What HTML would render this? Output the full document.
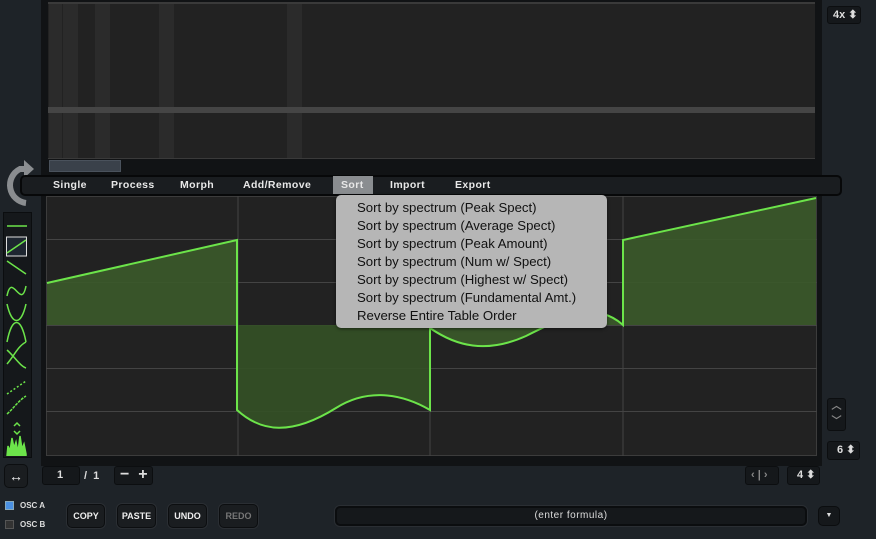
<!DOCTYPE html>
<html><head><meta charset="utf-8"><style>
*{margin:0;padding:0;box-sizing:border-box}
body{width:876px;height:539px;overflow:hidden;background:#1e2328;font-family:"Liberation Sans",sans-serif;position:relative}
.a{position:absolute}
.mb{font-weight:bold;font-size:10.5px;color:#e8e8e8;letter-spacing:.4px}
.btn{position:absolute;top:504px;height:24px;border:1px solid #0c0e10;border-radius:5px;background:#1a1d20;box-shadow:0 0 0 1px #2a2e33;color:#eee;font-weight:bold;font-size:9px;text-align:center;line-height:22px}
.box{position:absolute;background:#15181b;border:1px solid #0c0e10;border-radius:3px;color:#ddd;font-weight:bold;font-size:11px}
.mi{position:absolute;left:21px;font-size:13.2px;color:#111}
</style></head><body>
<div class="a" style="left:41px;top:0;width:781px;height:466px;background:#111315"></div>
<div class="a" style="left:48px;top:2px;width:767px;height:157px;background:#222;border-top:2px solid #3a3a3a;border-bottom:1px solid #3a3a3a"></div>
<div class="a" style="left:49px;top:4px;width:13px;height:154px;background:#2b2b2b"></div>
<div class="a" style="left:63px;top:4px;width:15px;height:154px;background:#2b2b2b"></div>
<div class="a" style="left:95px;top:4px;width:15px;height:154px;background:#2b2b2b"></div>
<div class="a" style="left:159px;top:4px;width:15px;height:154px;background:#2b2b2b"></div>
<div class="a" style="left:287px;top:4px;width:15px;height:154px;background:#2b2b2b"></div>
<div class="a" style="left:48px;top:107px;width:767px;height:6px;background:#454545"></div>
<div class="a" style="left:49px;top:160px;width:72px;height:12px;background:#3a414a;border:1px solid #4a525c"></div>
<svg class="a" style="left:2px;top:155px" width="34" height="52"><path d="M24 48 A18 18 0 0 1 18 14 L24 14" fill="none" stroke="#8a8d90" stroke-width="6"/><path d="M22 5 L32 14 L22 23Z" fill="#8a8d90"/></svg>
<div class="a" style="left:20px;top:175px;width:822px;height:21px;background:#1a1d20;border:2px solid #070809;border-radius:5px"></div>
<div class="a" style="left:333px;top:176px;width:40px;height:18px;background:#8a8d90"></div>
<div class="a mb" style="left:53px;top:179px">Single</div>
<div class="a mb" style="left:111px;top:179px">Process</div>
<div class="a mb" style="left:180px;top:179px">Morph</div>
<div class="a mb" style="left:243px;top:179px">Add/Remove</div>
<div class="a mb" style="left:341px;top:179px">Sort</div>
<div class="a mb" style="left:390px;top:179px">Import</div>
<div class="a mb" style="left:455px;top:179px">Export</div>
<svg class="a" style="left:46px;top:196px" width="771" height="260">
<rect x="0" y="0" width="771" height="260" fill="#222" stroke="#3c3c3c" stroke-width="2"/>
<g stroke="#444" stroke-width="1">
<line x1="192" y1="0" x2="192" y2="260"/><line x1="384" y1="0" x2="384" y2="260"/><line x1="577" y1="0" x2="577" y2="260"/>
<line x1="0" y1="43.5" x2="771" y2="43.5"/><line x1="0" y1="86.5" x2="771" y2="86.5"/><line x1="0" y1="129.5" x2="771" y2="129.5"/><line x1="0" y1="172.5" x2="771" y2="172.5"/><line x1="0" y1="215.5" x2="771" y2="215.5"/>
</g>
<path d="M1 87 L191 44 L191 129 L1 129 Z" fill="#3b5a2a" opacity=".9"/>
<path d="M191 129 L191 214 C215 236 245 240 290 212 C325 190 360 200 384 214 L384 129 Z" fill="#345126" opacity=".9"/>
<path d="M384 129 L384 132 C410 150 440 158 480 140 C520 120 550 105 577 129 Z" fill="#3b5a2a" opacity=".9"/>
<path d="M577 129 L577 44 L770 2 L770 129 Z" fill="#3b5a2a" opacity=".9"/>
<path d="M1 87 L191 44 L191 214 C215 236 245 240 290 212 C325 190 360 200 384 214 L384 132 C410 150 440 158 480 140 C520 120 550 105 577 129 L577 44 L770 2" fill="none" stroke="#6ce44a" stroke-width="2"/>
</svg>
<div class="a" style="left:336px;top:195px;width:271px;height:133px;background:#b6b6b6;border-radius:5px;box-shadow:0 1px 3px rgba(0,0,0,.5)">
<div class="mi" style="top:5px">Sort by spectrum (Peak Spect)</div>
<div class="mi" style="top:23px">Sort by spectrum (Average Spect)</div>
<div class="mi" style="top:41px">Sort by spectrum (Peak Amount)</div>
<div class="mi" style="top:59px">Sort by spectrum (Num w/ Spect)</div>
<div class="mi" style="top:77px">Sort by spectrum (Highest w/ Spect)</div>
<div class="mi" style="top:95px">Sort by spectrum (Fundamental Amt.)</div>
<div class="mi" style="top:113px">Reverse Entire Table Order</div>
</div>
<div class="a" style="left:3px;top:212px;width:29px;height:246px;background:#15181b;border:1px solid #0b0d0f"></div>
<svg class="a" style="left:6px;top:216px" width="22" height="240" fill="none" stroke="#6ce44a" stroke-width="1.5">
<line x1="1" y1="10" x2="21" y2="10"/>
<rect x="0.5" y="21" width="20" height="19" fill="#1e2630" stroke="#ddd" stroke-width="1"/>
<line x1="1" y1="37" x2="20" y2="24"/>
<line x1="1" y1="45" x2="20" y2="58"/>
<path d="M1 80 C6 55 15 95 20 70"/>
<path d="M1 88 C6 110 15 110 20 88"/>
<path d="M1 126 C6 100 15 100 20 126"/>
<path d="M1 148 C8 140 12 130 20 126"/>
<path d="M1 134 C8 140 14 150 20 152"/>
<path d="M1 178 L20 165" stroke-dasharray="2 2"/>
<path d="M1 198 C8 192 12 185 20 180" stroke-dasharray="3 1"/>
<path d="M8 210 l3 -3 l3 3 M8 215 l3 3 l3 -3"/>
<path d="M1 240 L2 230 L4 235 L6 222 L8 232 L10 226 L12 236 L14 220 L16 233 L18 228 L20 238 L20 240Z" fill="#6ce44a"/>
</svg>
<div class="a" style="left:4px;top:464px;width:24px;height:24px;border:1px solid #0c0e10;border-radius:5px;background:#1a1d20;color:#eee;font-size:14px;text-align:center;line-height:22px">↔</div>
<div class="box" style="left:42px;top:466px;width:38px;height:19px;padding-left:14px;line-height:17px">1</div>
<div class="a" style="left:84px;top:470px;color:#ddd;font-size:11px;font-weight:bold">/ &nbsp;1</div>
<div class="box" style="left:114px;top:466px;width:39px;height:19px;font-size:16px;line-height:16px;padding-left:5px">−&nbsp;&nbsp;+</div>
<div class="a" style="left:5px;top:501px;width:9px;height:9px;background:#4a90e2;border:1px solid #8ab"></div>
<div class="a" style="left:5px;top:520px;width:9px;height:9px;background:#333;border:1px solid #555"></div>
<div class="a" style="left:20px;top:501px;font-size:8px;font-weight:bold;color:#ddd">OSC A</div>
<div class="a" style="left:20px;top:520px;font-size:8px;font-weight:bold;color:#ddd">OSC B</div>
<div class="btn" style="left:67px;width:38px">COPY</div>
<div class="btn" style="left:117px;width:39px">PASTE</div>
<div class="btn" style="left:168px;width:39px">UNDO</div>
<div class="btn" style="left:219px;width:39px;color:#777">REDO</div>
<div class="a" style="left:335px;top:506px;width:472px;height:20px;background:#15181b;border:2px solid #0b0d0f;border-radius:5px;box-shadow:0 0 0 1px #2a2e33;color:#ddd;font-size:10px;text-align:center;line-height:16px;letter-spacing:.5px">(enter formula)</div>
<div class="a" style="left:818px;top:506px;width:22px;height:20px;background:#15181b;border:1px solid #0b0d0f;border-radius:5px;color:#ddd;font-size:7px;text-align:center;line-height:18px">▼</div>
<div class="box" style="left:827px;top:6px;width:34px;height:18px;padding-left:5px;line-height:16px">4x ⬍</div>
<div class="box" style="left:827px;top:398px;width:19px;height:33px;color:#888;font-size:10px;text-align:center;line-height:15px">︿<br>﹀</div>
<div class="box" style="left:827px;top:441px;width:33px;height:19px;padding-left:9px;line-height:17px">6 ⬍</div>
<div class="box" style="left:745px;top:466px;width:34px;height:19px;color:#888;padding-left:5px;line-height:17px">‹ | ›</div>
<div class="box" style="left:787px;top:466px;width:33px;height:19px;padding-left:9px;line-height:17px">4 ⬍</div>
</body></html>
